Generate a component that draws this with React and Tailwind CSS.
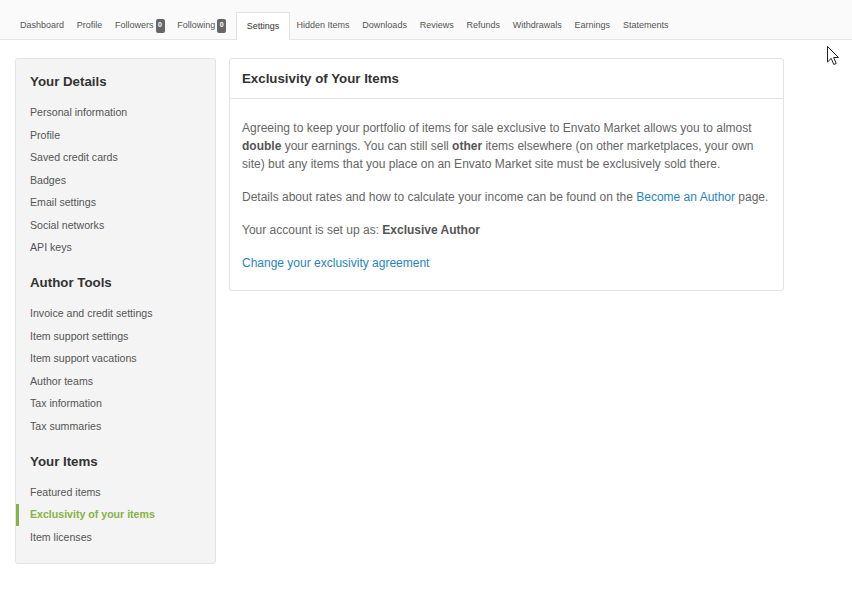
import React from 'react'

const tabs = [
  { label: 'Dashboard' },
  { label: 'Profile' },
  { label: 'Followers', badge: '0' },
  { label: 'Following', badge: '0' },
  { label: 'Settings', active: true },
  { label: 'Hidden Items' },
  { label: 'Downloads' },
  { label: 'Reviews' },
  { label: 'Refunds' },
  { label: 'Withdrawals' },
  { label: 'Earnings' },
  { label: 'Statements' },
]

const sections = [
  {
    title: 'Your Details',
    links: ['Personal information', 'Profile', 'Saved credit cards', 'Badges', 'Email settings', 'Social networks', 'API keys'],
  },
  {
    title: 'Author Tools',
    links: ['Invoice and credit settings', 'Item support settings', 'Item support vacations', 'Author teams', 'Tax information', 'Tax summaries'],
  },
  {
    title: 'Your Items',
    links: ['Featured items', 'Exclusivity of your items', 'Item licenses'],
  },
]

function Tab({ tab }) {
  if (tab.active) {
    return (
      <div className="h-[28px] -mb-px ml-[3px] flex items-center px-[10px] bg-white border border-b-0 border-[#e2e2e2] text-[#333]">
        {tab.label}
      </div>
    )
  }
  return (
    <div className="h-[27px] flex items-center px-[6.4px] text-[#555]">
      {tab.label}
      {tab.badge && (
        <span className="ml-[2px] inline-flex items-center justify-center h-[14px] px-[2.5px] rounded-[2px] bg-[#666] text-white text-[7px] font-bold">
          {tab.badge}
        </span>
      )}
    </div>
  )
}

export default function App() {
  return (
    <div className="relative min-h-[593px] bg-white font-['Liberation_Sans',Arial,sans-serif]">
      <nav className="h-[40px] flex items-end pl-[13.6px] bg-[#fafafa] border-b border-[#e5e5e5] text-[9px]">
        {tabs.map(t => <Tab key={t.label} tab={t} />)}
      </nav>

      <div className="flex items-start gap-[13px] px-[15px] pt-[18px]">
        <aside className="w-[201px] shrink-0 bg-[#f4f4f4] border border-[#e3e3e3] rounded-[3px] pt-[12px] pb-[14px]">
          {sections.map((s, i) => (
            <div key={s.title} className={i > 0 ? 'mt-[12.75px]' : ''}>
              <h3 className="h-[20px] leading-[21px] px-[14px] text-[13.3px] font-bold text-[#333] mb-[10.75px]">{s.title}</h3>
              <ul>
                {s.links.map(l => {
                  const active = l === 'Exclusivity of your items'
                  return (
                    <li
                      key={l}
                      className={
                        active
                          ? 'h-[22.5px] flex items-center pl-[11px] border-l-[3px] border-[#82b541] text-[10.6px] font-bold text-[#82b541]'
                          : 'h-[22.5px] flex items-center px-[14px] text-[10.6px] text-[#555]'
                      }
                    >
                      {l}
                    </li>
                  )
                })}
              </ul>
            </div>
          ))}
        </aside>

        <section className="w-[555px] bg-white border border-[#e3e3e3] rounded-[3px]">
          <div className="h-[40px] flex items-center px-[12px] border-b border-[#e3e3e3]">
            <h2 className="text-[13.3px] font-bold text-[#333]">Exclusivity of Your Items</h2>
          </div>
          <div className="px-[12px] pt-[20px] pb-[18px] text-[12px] leading-[18px] text-[#666]">
            <p className="mb-[15px]">
              Agreeing to keep your portfolio of items for sale exclusive to Envato Market allows you to almost{' '}
              <b className="text-[#555]">double</b> your earnings. You can still sell <b className="text-[#555]">other</b> items elsewhere (on other marketplaces, your own site) but any items that you place on an Envato Market site must be exclusively sold there.
            </p>
            <p className="mb-[15px]">
              Details about rates and how to calculate your income can be found on the{' '}
              <a className="text-[#1f85bf]">Become an Author</a> page.
            </p>
            <p className="mb-[15px]">
              Your account is set up as: <b className="text-[#555]">Exclusive Author</b>
            </p>
            <p>
              <a className="text-[#1f85bf]">Change your exclusivity agreement</a>
            </p>
          </div>
        </section>
      </div>

      <svg className="absolute left-[827px] top-[46px]" width="13" height="20" viewBox="0 0 13 20">
        <path d="M0.5 0.5 L0.5 16 L4.2 12.4 L6.8 18.5 L9.2 17.4 L6.6 11.5 L11.5 11.5 Z" fill="white" stroke="#222" strokeWidth="1" strokeLinejoin="round" />
      </svg>
    </div>
  )
}
